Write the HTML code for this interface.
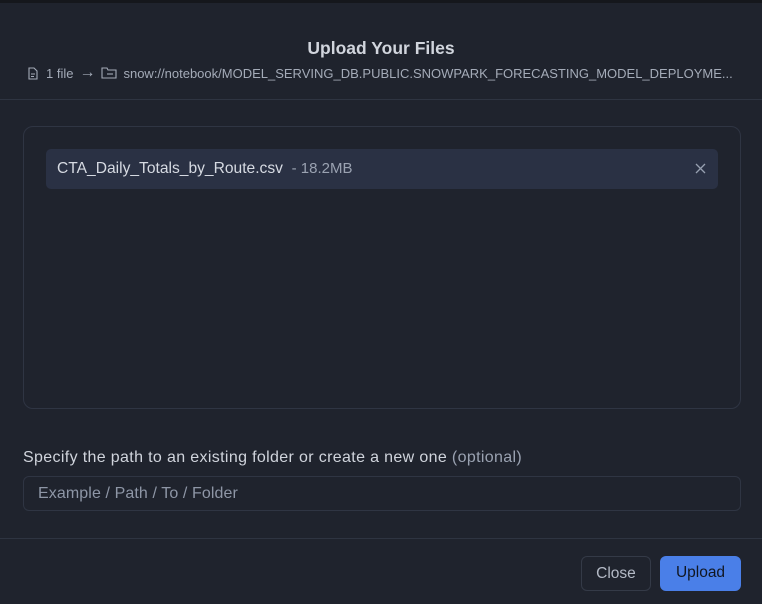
<!DOCTYPE html>
<html><head><style>
*{box-sizing:border-box;margin:0;padding:0}
body{width:762px;height:604px;background:#1f232d;font-family:"Liberation Sans",sans-serif;position:relative;overflow:hidden;color:#d4d8e0}
.top{position:absolute;left:0;top:0;width:762px;height:3px;background:#15171c}
.title{position:absolute;top:38px;left:0;width:762px;text-align:center;font-size:17.5px;font-weight:bold;color:#d1d5dd}
.sub{position:absolute;top:64px;left:27px;font-size:13px;letter-spacing:0;color:#a4abb8;white-space:nowrap;display:flex;align-items:center}
.hr{position:absolute;left:0;width:762px;height:1px;background:#2e3441}
.drop{position:absolute;left:23px;top:126px;width:718px;height:283px;border:1px solid #2f3543;border-radius:10px}
.file{position:absolute;left:46px;top:149px;width:672px;height:40px;background:#2a3144;border-radius:5px;font-size:15.6px;color:#d6dae2;padding-left:11px;line-height:40px}
.file span{color:#9aa2b1;font-size:15px}
.x{position:absolute;right:12px;top:14px}
.lbl{position:absolute;left:23px;top:449px;font-size:16px;letter-spacing:0.35px;color:#d0d4dc}
.lbl span{color:#9aa2b1}
.inp{position:absolute;left:23px;top:476px;width:718px;height:35px;border:1px solid #2f3543;border-radius:6px;font-size:16px;letter-spacing:0.1px;color:#8e96a6;padding-left:14px;line-height:34px}
.btn{position:absolute;top:556px;height:35px;border-radius:6px;font-size:15.5px;line-height:34px;text-align:center}
.close{left:581px;width:70px;border:1px solid #343a47;color:#b4bac6}
.up{left:660px;width:81px;background:#4a7fe8;color:#111722}
</style></head><body>
<div class="top"></div>
<div class="title">Upload Your Files</div>
<div class="sub">
<svg width="12" height="13" viewBox="0 0 12 13" fill="none" stroke="#a4abb8" stroke-width="1.1"><path d="M2 1h5l3 3v8H2z"/><path d="M4 7h4M4 9.5h3"/></svg>
<span style="margin-left:7px">1 file</span>
<span style="margin:0 6px;font-size:16px">→</span>
<svg width="16" height="12" viewBox="0 0 16 12" fill="none" stroke="#a4abb8" stroke-width="1.1"><path d="M1 1h5l1 2h8v8H1z"/><path d="M6 7h6"/></svg>
<span style="margin-left:6px">snow://notebook/MODEL_SERVING_DB.PUBLIC.SNOWPARK_FORECASTING_MODEL_DEPLOYME...</span>
</div>
<div class="hr" style="top:99px"></div>
<div class="drop"></div>
<div class="file">CTA_Daily_Totals_by_Route.csv &nbsp;<span>- 18.2MB</span>
<svg class="x" width="11" height="11" viewBox="0 0 11 11" stroke="#97a0b0" stroke-width="1.3"><path d="M1 1l9 9M10 1l-9 9"/></svg></div>
<div class="lbl">Specify the path to an existing folder or create a new one <span>(optional)</span></div>
<div class="inp">Example / Path / To / Folder</div>
<div class="hr" style="top:538px"></div>
<div class="btn close">Close</div>
<div class="btn up">Upload</div>
</body></html>
